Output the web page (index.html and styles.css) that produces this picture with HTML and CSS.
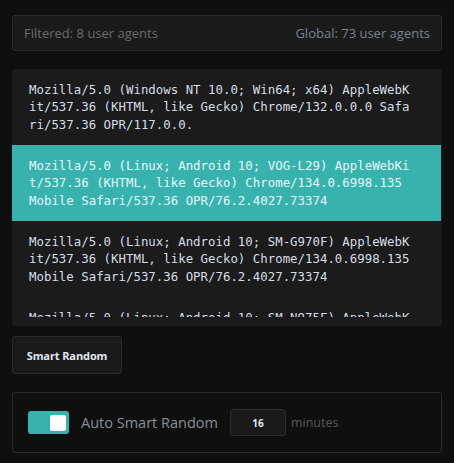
FILE: index.html
```html
<!DOCTYPE html>
<html>
<head>
<meta charset="utf-8">
<link rel="stylesheet" href="styles.css">
</head>
<body>
<div class="app">
  <div class="stats">
    <span class="stat-filtered">Filtered: 8 user agents</span>
    <span class="stat-global">Global: 73 user agents</span>
  </div>
  <div class="list">
    <div class="scroll">
      <div class="item">Mozilla/5.0 (Windows NT 10.0; Win64; x64) AppleWebKit/537.36 (KHTML, like Gecko) Chrome/132.0.0.0 Safari/537.36 OPR/117.0.0.</div>
      <div class="item selected">Mozilla/5.0 (Linux; Android 10; VOG-L29) AppleWebKit/537.36 (KHTML, like Gecko) Chrome/134.0.6998.135 Mobile Safari/537.36 OPR/76.2.4027.73374</div>
      <div class="item">Mozilla/5.0 (Linux; Android 10; SM-G970F) AppleWebKit/537.36 (KHTML, like Gecko) Chrome/134.0.6998.135 Mobile Safari/537.36 OPR/76.2.4027.73374</div>
      <div class="item">Mozilla/5.0 (Linux; Android 10; SM-N975F) AppleWebKit/537.36 (KHTML, like Gecko) Chrome/134.0.6998.135 Mobile Safari/537.36 OPR/76.2.4027.73374</div>
    </div>
  </div>
  <button class="btn">Smart Random</button>
  <div class="auto">
    <div class="toggle"><div class="knob"></div></div>
    <span class="auto-label">Auto Smart Random</span>
    <div class="num">16</div>
    <span class="unit">minutes</span>
  </div>
</div>
</body>
</html>
```
FILE: styles.css
```css
html, body {
  margin: 0;
  padding: 0;
  background: #0f0f0f;
}
body {
  font-family: "Open Sans", "Noto Sans", sans-serif;
}
.app {
  width: 430px;
  padding: 15px 12px 0 12px;
  display: flex;
  flex-direction: column;
}
.stats {
  box-sizing: border-box;
  height: 36px;
  display: flex;
  justify-content: space-between;
  align-items: center;
  padding: 0 11px;
  background: #1a1a1a;
  border: 1px solid #2b2b2b;
  border-radius: 3px;
  font-size: 13px;
}
.stat-filtered { color: #6c6c6c; }
.stat-global { color: #7b828d; }
.list {
  margin-top: 18px;
  background: #1b1b1b;
  border-radius: 4px;
  padding-bottom: 9px;
}
.scroll {
  height: 248px;
  overflow: hidden;
}
.item {
  padding: 12px 30px 12px 17px;
  font-family: "DejaVu Sans Mono", monospace;
  font-size: 12.4px;
  line-height: 17.33px;
  color: #d6dde8;
  word-break: break-all;
}
.item.selected {
  background: #38b2ac;
  color: #e6f6ff;
  margin-right: 1px;
}
.btn {
  align-self: flex-start;
  margin-top: 10px;
  box-sizing: border-box;
  width: 110px;
  height: 38px;
  padding: 0;
  background: #1a1a1a;
  border: 1px solid #2b2b2b;
  border-radius: 3px;
  font-family: "Open Sans", sans-serif;
  font-weight: 700;
  font-size: 11px;
  letter-spacing: -0.1px;
  color: #e0e8f2;
}
.auto {
  margin-top: 18px;
  box-sizing: border-box;
  height: 61px;
  display: flex;
  align-items: center;
  padding: 0 15px;
  border: 1px solid #2a2a2a;
  border-radius: 3px;
}
.toggle {
  width: 41px;
  height: 23px;
  border-radius: 3px;
  background: #38b2ac;
  display: flex;
  align-items: center;
  justify-content: flex-end;
  padding-right: 3px;
  box-sizing: border-box;
}
.knob {
  width: 16px;
  height: 16px;
  background: #ffffff;
  border-radius: 2px;
}
.auto-label {
  margin-left: 12px;
  font-size: 14.5px;
  color: #89909a;
}
.num {
  margin-left: 12px;
  box-sizing: border-box;
  width: 56px;
  height: 27px;
  display: flex;
  align-items: center;
  justify-content: center;
  background: #1a1a1a;
  border: 1px solid #2c2c2c;
  border-radius: 3px;
  font-size: 10px;
  font-weight: 700;
  color: #dfe8f5;
}
.unit {
  margin-left: 5px;
  font-size: 12.5px;
  color: #5a5a5a;
}
```
